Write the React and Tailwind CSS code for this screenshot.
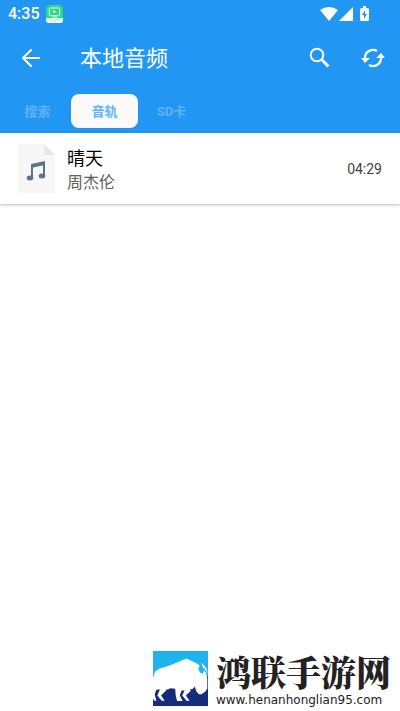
import { useState } from "react";

const tabs = [
  { id: "search", label: "搜索" },
  { id: "tracks", label: "音轨" },
  { id: "sd", label: "SD卡" },
];

const tracks = [{ id: 1, title: "晴天", artist: "周杰伦", duration: "04:29" }];

export default function App() {
  const [activeTab, setActiveTab] = useState("tracks");

  return (
    <div className="flex min-h-screen flex-col bg-white font-[Roboto,'Noto_Sans_CJK_SC',sans-serif]">
      <header className="bg-[#2196f3] text-white">
        <StatusBar />

        {/* Toolbar */}
        <div className="flex h-15 items-center pr-4 pl-5">
          <button type="button" aria-label="返回">
            <ArrowBack />
          </button>
          <h1 className="ml-9 flex-1 pt-0.5 text-[22px] leading-8">本地音频</h1>
          <button type="button" aria-label="搜索">
            <SearchIcon />
          </button>
          <button type="button" aria-label="刷新" className="ml-7">
            <RefreshIcon />
          </button>
        </div>

        {/* Tabs */}
        <div role="tablist" className="flex px-1 pt-1.5 pb-[5px]">
          {tabs.map((tab) => (
            <button
              key={tab.id}
              type="button"
              role="tab"
              aria-selected={tab.id === activeTab}
              onClick={() => setActiveTab(tab.id)}
              className={`h-[34px] w-[67px] rounded-lg pt-0.5 text-[13px] font-bold ${
                tab.id === activeTab
                  ? "bg-[#fafafa] text-[#64b5f6]"
                  : "text-[#5fb3f6]"
              }`}
            >
              {tab.label}
            </button>
          ))}
        </div>
      </header>

      <ul>
        {tracks.map((track) => (
          <TrackRow key={track.id} track={track} />
        ))}
      </ul>

      <Footer />
    </div>
  );
}

function StatusBar() {
  return (
    <div className="flex h-7 items-center pr-[31px] pl-2">
      <span className="text-base font-medium">4:35</span>
      <svg className="ml-1.5 h-[18px] w-[17px]" viewBox="0 0 51 54">
        <rect width="51" height="54" rx="11" fill="#2fd58c" />
        <path d="M0 40h51v4q0 10-10 10H10Q0 54 0 44z" fill="#f4fff9" />
        <rect x="10" y="9" width="31" height="23" rx="3" fill="none" stroke="#d8ffed" strokeWidth="3" />
        <path d="m22 15 9 5-9 5z" fill="#fff" />
        <path d="M18 36h15" stroke="#d8ffed" strokeWidth="3" />
        <path d="m10 48 5-3 3 4 5-4 5 4 4-5 9 1" fill="none" stroke="#7fd3ab" strokeWidth="2" />
      </svg>
      <svg className="ml-auto h-4 w-[18px]" viewBox="0 0 18 16" fill="#fff">
        <path d="M0 4Q9-2 18 4L9 15z" />
      </svg>
      <svg className="h-4 w-4" viewBox="0 0 16 16" fill="#fff">
        <path d="M15 1v14H1z" />
      </svg>
      <svg className="ml-1.5 h-4 w-[9px]" viewBox="0 0 9 16">
        <path d="M3 0h3v2h2l1 1v11l-1 1H1l-1-1V3l1-1h2z" fill="#fff" />
        <path d="M5 4 2 9h2v4l3-5H5z" fill="#2196f3" />
      </svg>
    </div>
  );
}

function ArrowBack() {
  return (
    <svg className="h-6 w-6" viewBox="0 0 24 24" fill="none" stroke="currentColor" strokeWidth="2" strokeLinecap="round" strokeLinejoin="round">
      <path d="M19 12H4M11 4l-8 8 8 8" />
    </svg>
  );
}

function SearchIcon() {
  return (
    <svg className="h-6 w-6" viewBox="0 0 24 24" fill="none" stroke="currentColor" strokeWidth="2">
      <circle cx="9" cy="9" r="6.3" />
      <path d="m13 13 2 2" />
      <path d="m14.5 14.5 6 6" strokeWidth="3" />
    </svg>
  );
}

function RefreshIcon() {
  return (
    <svg className="h-6 w-6 overflow-visible" viewBox="0 0 24 24" fill="none" stroke="currentColor" strokeWidth="2.3">
      <path d="M5 12a8 8 0 0 1 12-7M21 12a8 8 0 0 1-12 7" />
      <path d="M1 12h9l-5 5zM16 12h9l-4-5z" fill="currentColor" stroke="none" />
    </svg>
  );
}

function TrackRow({ track }) {
  return (
    <li className="flex h-18 items-center border-b border-[#d5d5d5] px-4.5 shadow-sm">
      <FileIcon />
      <div className="ml-3 flex-1 pt-1">
        <p className="text-[18px] leading-6 text-black">{track.title}</p>
        <p className="text-[16px] leading-6 text-[#616161]">{track.artist}</p>
      </div>
      <span className="pt-0.5 text-[14px] text-[#424242]">{track.duration}</span>
    </li>
  );
}

function FileIcon() {
  return (
    <svg className="h-[49px] w-[37px]" viewBox="0 0 37 49">
      <path d="M0 0h26l11 11v38H0z" fill="#f7f7f7" />
      <path d="M26 0v11h11z" fill="#e7e7e9" />
      <path d="M14 34V20M26 32V18" fill="none" stroke="#5d758b" strokeWidth="2" />
      <path d="m13 20 14-3v4l-14 3z" fill="#5d758b" />
      <ellipse cx="12" cy="34" rx="3.3" ry="2.5" fill="#5d758b" />
      <ellipse cx="24" cy="32" rx="3.3" ry="2.5" fill="#5d758b" />
    </svg>
  );
}

function Footer() {
  return (
    <footer className="mt-auto flex items-start self-end pr-[9px] pb-0.5">
      <BisonLogo />
      <div className="ml-2">
        <p className="font-['Noto_Serif_CJK_SC','Noto_Sans_CJK_SC',serif] text-[35px] leading-10 font-black text-[#222]">
          鸿联手游网
        </p>
        <p className="font-['DejaVu_Sans',sans-serif] text-[12px] leading-[18px] text-[#222]">
          www.henanhonglian95.com
        </p>
      </div>
    </footer>
  );
}

function BisonLogo() {
  return (
    <svg className="h-[55px] w-[55px]" viewBox="0 0 164 164">
      <path d="M0 0h164v164H0z" fill="#20b3ee" />
      <path d="M0 76h164v88H0z" fill="#172b7d" />
      <path
        d="M0 80 6 62l12-9 32-10 50-21 34 17 5 5-4 10 5 10 8 4 4-10 6 8 4 16v30l-5 8-12 9h-8l-8-9-4-14-7 7-8 1-6 4H82l-10-5-20-2-8 4H14L0 120z"
        fill="#fff"
      />
      <path d="m144 36 4 2 12 16 2 14-8-14-6-6z" fill="#fff" />
      {/* Legs */}
      <path
        d="M0 112h11L5 130l5 18H4l-4-6zM22 112h17v6L24 133l11 15H26L13 133zM66 110h22l-8 22 8 17H72l-4-14zM96 114h16v5L98 133l11 15h-9L87 133z"
        fill="#fff"
      />
    </svg>
  );
}
